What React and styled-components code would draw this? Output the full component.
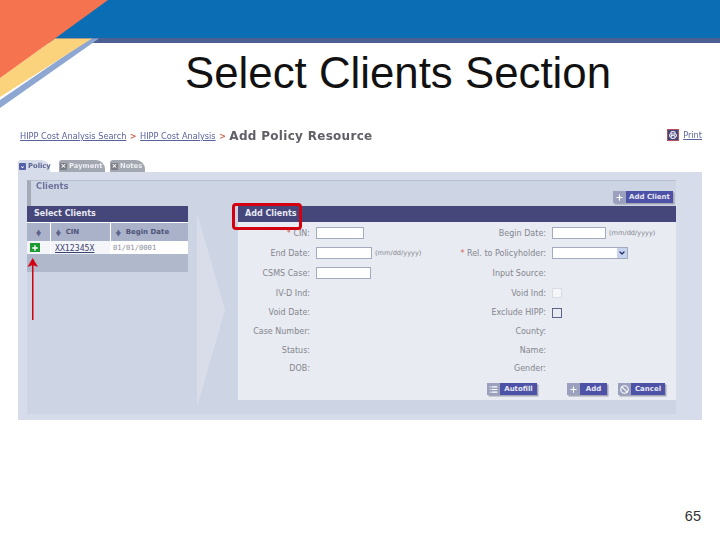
import React from 'react'
import styled, { createGlobalStyle } from 'styled-components'
import { Plus, Ban, List, ChevronDown, Printer } from 'lucide-react'

const Global = createGlobalStyle`
  html, body { margin: 0; padding: 0; background: #fff; }
  body { font-family: "Liberation Sans", Arial, sans-serif; }
`

const Slide = styled.div`
  width: 720px;
  height: 540px;
  overflow: hidden;
  display: flex;
  flex-direction: column;
  background: #fff;
`
const Banner = styled.div`
  position: relative;
  flex: none;
  height: 38px;
  background: #0b6db4;
  border-bottom: 5px solid #4c6092;
  svg { position: absolute; left: 0; top: 0; }
`
const Title = styled.h1`
  margin: 0;
  flex: none;
  height: 59px;
  padding-left: 76px;
  text-align: center;
  font: 400 43.8px/59px "Liberation Sans", Arial, sans-serif;
  color: #111;
`
const Shot = styled.div`
  position: relative;
  flex: none;
  margin: 24px 18px 0;
  font-family: "DejaVu Sans", Verdana, sans-serif;
`
const Blurred = styled.div`
  filter: blur(0.45px);
`
const Crumbs = styled.div`
  display: flex;
  align-items: center;
  height: 20px;
  padding-left: 2px;
  font-size: 8.2px;
  color: #5b639c;
`
const CrumbLink = styled.span`
  text-decoration: underline;
  white-space: nowrap;
`
const CrumbSep = styled.span`
  margin: 0 3.5px;
  color: #c8604a;
  font-weight: 700;
  font-size: 8px;
`
const CrumbNow = styled.span`
  font-size: 12px;
  font-weight: 700;
  letter-spacing: 0.3px;
  color: #5f5f66;
  white-space: nowrap;
`
const PrintBox = styled.div`
  margin: 0 0 3px auto;
  display: flex;
  align-items: center;
  gap: 4px;
`
const PrintIcon = styled.span`
  width: 10px;
  height: 10px;
  display: flex;
  align-items: center;
  justify-content: center;
  background: #46467a;
  border: 1.5px solid #b5505a;
  color: #fff;
`
const Tabs = styled.div`
  display: flex;
  align-items: flex-end;
  height: 14px;
  margin-top: 12px;
`
const Tab = styled.div`
  display: flex;
  align-items: center;
  gap: 2px;
  height: 12px;
  width: ${p => p.$w}px;
  margin-right: ${p => p.$gap}px;
  padding-left: 1px;
  box-sizing: border-box;
  border-radius: 3px 9px 0 0;
  font-size: 6.8px;
  font-weight: 700;
  color: ${p => (p.$active ? '#5b6390' : '#eceef3')};
  background: ${p => (p.$active ? '#d6dce9' : '#a3a7b0')};
`
const TabMark = styled.span`
  flex: none;
  width: 7px;
  height: 7px;
  display: flex;
  align-items: center;
  justify-content: center;
  font-size: 7px;
  line-height: 7px;
  border-radius: 1px;
  color: #fff;
  background: ${p => (p.$active ? '#5460a8' : '#7a7d86')};
`
const Outer = styled.div`
  background: #d6dce9;
  padding: 8px 26px 6px 9px;
`
const Inner = styled.div`
  background: #cdd4e4;
  height: 234px;
  display: flex;
  flex-direction: column;
`
const SectionBar = styled.div`
  flex: none;
  height: 26px;
  box-sizing: border-box;
  display: flex;
  justify-content: space-between;
  border-top: 1px solid #b9bfce;
  border-left: 4px solid #a6aab6;
  padding: 0 3px 3px 5px;
`
const SectionName = styled.span`
  font-size: 8.4px;
  font-weight: 700;
  color: #6d7399;
`
const Columns = styled.div`
  flex: 1;
  display: flex;
  align-items: stretch;
`
const LeftCol = styled.div`
  flex: none;
  width: 161px;
`
const HeadBar = styled.div`
  height: 16px;
  background: #45467a;
  color: #e8e9f2;
  font-size: 8px;
  font-weight: 700;
  line-height: 16px;
  padding-left: ${p => p.$pad}px;
`
const ListGrid = styled.div`
  display: grid;
  grid-template-columns: 23px 59px 1fr;
  column-gap: 1px;
  background: #fff;
`
const HeadCell = styled.div`
  height: 18px;
  background: #a9b2c9;
  margin-top: 1px;
  display: flex;
  align-items: center;
  justify-content: ${p => (p.$center ? 'center' : 'flex-start')};
  gap: 5px;
  padding-left: ${p => (p.$center ? 0 : 5)}px;
  font-size: 7px;
  font-weight: 700;
  color: #4f5478;
`
const Sort = styled.span`
  font-size: 6px;
  line-height: 3.5px;
  color: #5d648c;
  text-align: center;
  white-space: pre-line;
`
const BodyCell = styled.div`
  height: 13px;
  background: ${p => (p.$white ? '#f4f5f8' : '#fff')};
  display: flex;
  align-items: center;
  padding-left: ${p => p.$pad}px;
  font-family: "DejaVu Sans Mono", monospace;
  font-size: ${p => (p.$link ? 8.2 : 7.2)}px;
  color: ${p => p.$color};
  text-decoration: ${p => (p.$link ? 'underline' : 'none')};
`
const GreenAdd = styled.span`
  width: 10px;
  height: 9px;
  background: #1d9a32;
  display: flex;
  align-items: center;
  justify-content: center;
  color: #fff;
`
const ListFoot = styled.div`
  height: 18px;
  background: #b0b8cc;
`
const Chevron = styled.div`
  flex: none;
  width: 50px;
`
const RightCol = styled.div`
  flex: 1;
  height: 194px;
  background: #e8ebf1;
  display: flex;
  flex-direction: column;
`
const FormGrid = styled.div`
  display: grid;
  grid-template-columns: 72px 120px 104px 1fr;
  column-gap: 6px;
  grid-template-rows: 20px 20px 20px 20px 19px 19px 18px 19px;
  padding-top: 1px;
  align-items: center;
`
const Label = styled.div`
  text-align: right;
  font-size: 8px;
  color: #85868f;
  white-space: nowrap;
`
const Req = styled.span`
  color: #d2604f;
`
const Field = styled.div`
  display: flex;
  align-items: center;
  gap: 3px;
  font-size: 6.6px;
  color: #85868f;
  white-space: nowrap;
`
const Input = styled.span`
  display: block;
  flex: none;
  width: ${p => p.$w}px;
  height: 10px;
  background: #fff;
  border: 1px solid #a4aabd;
`
const Select = styled.span`
  flex: none;
  width: 74px;
  height: 10px;
  display: flex;
  justify-content: flex-end;
  background: #fff;
  border: 1px solid #a4aabd;
`
const SelectArrow = styled.span`
  width: 10px;
  display: flex;
  align-items: center;
  justify-content: center;
  background: #c8d4ee;
  color: #27306f;
`
const Check = styled.span`
  width: 8px;
  height: 8px;
  background: ${p => (p.$on ? '#e8ebf1' : '#f5f6f8')};
  border: 1px solid ${p => (p.$on ? '#5a6488' : '#d9dce4')};
`
const Actions = styled.div`
  display: flex;
  justify-content: flex-end;
  padding: 5px 11px 0 0;
`
const Button = styled.div`
  flex: none;
  align-self: flex-end;
  display: flex;
  width: ${p => p.$w}px;
  height: 12px;
  margin-left: ${p => p.$gap}px;
  box-shadow: 1.5px 1.5px 0 #a3a7b5;
`
const ButtonIcon = styled.span`
  flex: none;
  width: 13px;
  display: flex;
  align-items: center;
  justify-content: center;
  background: #9aa0bd;
  color: #fff;
`
const ButtonText = styled.span`
  flex: 1;
  background: #4e52a6;
  color: #e6e7f4;
  font-size: 7px;
  font-weight: 700;
  line-height: 12px;
  text-align: center;
`
const RedBox = styled.div`
  position: absolute;
  left: 214px;
  top: 77px;
  width: 64px;
  height: 21px;
  border: 3px solid #d5000f;
  border-radius: 4px;
`
const Arrow = styled.svg`
  position: absolute;
  left: 8px;
  top: 132px;
`
const PageFoot = styled.div`
  margin-top: auto;
  padding: 0 19px 16px 0;
  text-align: right;
  font-size: 14.5px;
  line-height: 16px;
  color: #333;
`

const fields = [
  [<><Req>* </Req>CIN:</>, <Input $w={46} />, 'Begin Date:', <><Input $w={52} /> (mm/dd/yyyy)</>],
  ['End Date:', <><Input $w={54} /> (mm/dd/yyyy)</>, <><Req>* </Req>Rel. to Policyholder:</>, <Select><SelectArrow><ChevronDown size={8} strokeWidth={4} /></SelectArrow></Select>],
  ['CSMS Case:', <Input $w={53} />, 'Input Source:', null],
  ['IV-D Ind:', null, 'Void Ind:', <Check />],
  ['Void Date:', null, 'Exclude HIPP:', <Check $on />],
  ['Case Number:', null, 'County:', null],
  ['Status:', null, 'Name:', null],
  ['DOB:', null, 'Gender:', null],
]

const ActionButton = ({ icon: Icon, w, gap, children }) => (
  <Button $w={w} $gap={gap}>
    <ButtonIcon><Icon size={9} strokeWidth={3} /></ButtonIcon>
    <ButtonText>{children}</ButtonText>
  </Button>
)

export default function App() {
  return (
    <Slide>
      <Global />
      <Banner>
        <svg width="110" height="110" viewBox="0 0 110 110">
          <polygon points="0,108 99,38.5 90,38.5 0,100" fill="#8ea6d2" />
          <polygon points="0,78 55,38.5 92,38.5 0,97" fill="#fbd37c" />
          <polygon points="0,0 108,0 55,38.5 0,78" fill="#f6734f" />
        </svg>
      </Banner>
      <Title>Select Clients Section</Title>
      <Shot>
        <Blurred>
          <Crumbs>
            <CrumbLink>HIPP Cost Analysis Search</CrumbLink>
            <CrumbSep>&gt;</CrumbSep>
            <CrumbLink>HIPP Cost Analysis</CrumbLink>
            <CrumbSep>&gt;</CrumbSep>
            <CrumbNow>Add Policy Resource</CrumbNow>
            <PrintBox>
              <PrintIcon><Printer size={8} strokeWidth={3} /></PrintIcon>
              <CrumbLink>Print</CrumbLink>
            </PrintBox>
          </Crumbs>
          <Tabs>
            <Tab $active $w={32} $gap={9}><TabMark $active>⌄</TabMark>Policy</Tab>
            <Tab $w={46} $gap={5}><TabMark>×</TabMark>Payment</Tab>
            <Tab $w={35} $gap={0}><TabMark>×</TabMark>Notes</Tab>
          </Tabs>
          <Outer>
            <Inner>
              <SectionBar>
                <SectionName>Clients</SectionName>
                <ActionButton icon={Plus} w={60} gap={0}>Add Client</ActionButton>
              </SectionBar>
              <Columns>
                <LeftCol>
                  <HeadBar $pad={7}>Select Clients</HeadBar>
                  <ListGrid>
                    <HeadCell $center><Sort>{'▲\n▼'}</Sort></HeadCell>
                    <HeadCell><Sort>{'▲\n▼'}</Sort>CIN</HeadCell>
                    <HeadCell><Sort>{'▲\n▼'}</Sort>Begin Date</HeadCell>
                    <BodyCell $pad={3} $white><GreenAdd><Plus size={8} strokeWidth={4} /></GreenAdd></BodyCell>
                    <BodyCell $pad={4} $white $link $color="#3c4270">XX12345X</BodyCell>
                    <BodyCell $pad={2} $color="#8b8d97">01/01/0001</BodyCell>
                  </ListGrid>
                  <ListFoot />
                </LeftCol>
                <Chevron>
                  <svg width="50" height="208" viewBox="0 0 50 208">
                    <polygon points="9,7 37,104 9,201" fill="#d8dde9" />
                  </svg>
                </Chevron>
                <RightCol>
                  <HeadBar $pad={7}>Add Clients</HeadBar>
                  <FormGrid>
                    {fields.map((row, i) => (
                      <React.Fragment key={i}>
                        <Label>{row[0]}</Label>
                        <Field>{row[1]}</Field>
                        <Label>{row[2]}</Label>
                        <Field>{row[3]}</Field>
                      </React.Fragment>
                    ))}
                  </FormGrid>
                  <Actions>
                    <ActionButton icon={List} w={50} gap={0}>Autofill</ActionButton>
                    <ActionButton icon={Plus} w={40} gap={30}>Add</ActionButton>
                    <ActionButton icon={Ban} w={47} gap={11}>Cancel</ActionButton>
                  </Actions>
                </RightCol>
              </Columns>
            </Inner>
          </Outer>
        </Blurred>
        <RedBox />
        <Arrow width="14" height="64" viewBox="0 0 14 64">
          <polygon points="6,6 6,62 7.5,62 7.5,6" fill="#d5000f" />
          <polygon points="6.7,0 12,9 6.7,7 1.5,9" fill="#d5000f" />
        </Arrow>
      </Shot>
      <PageFoot>65</PageFoot>
    </Slide>
  )
}
